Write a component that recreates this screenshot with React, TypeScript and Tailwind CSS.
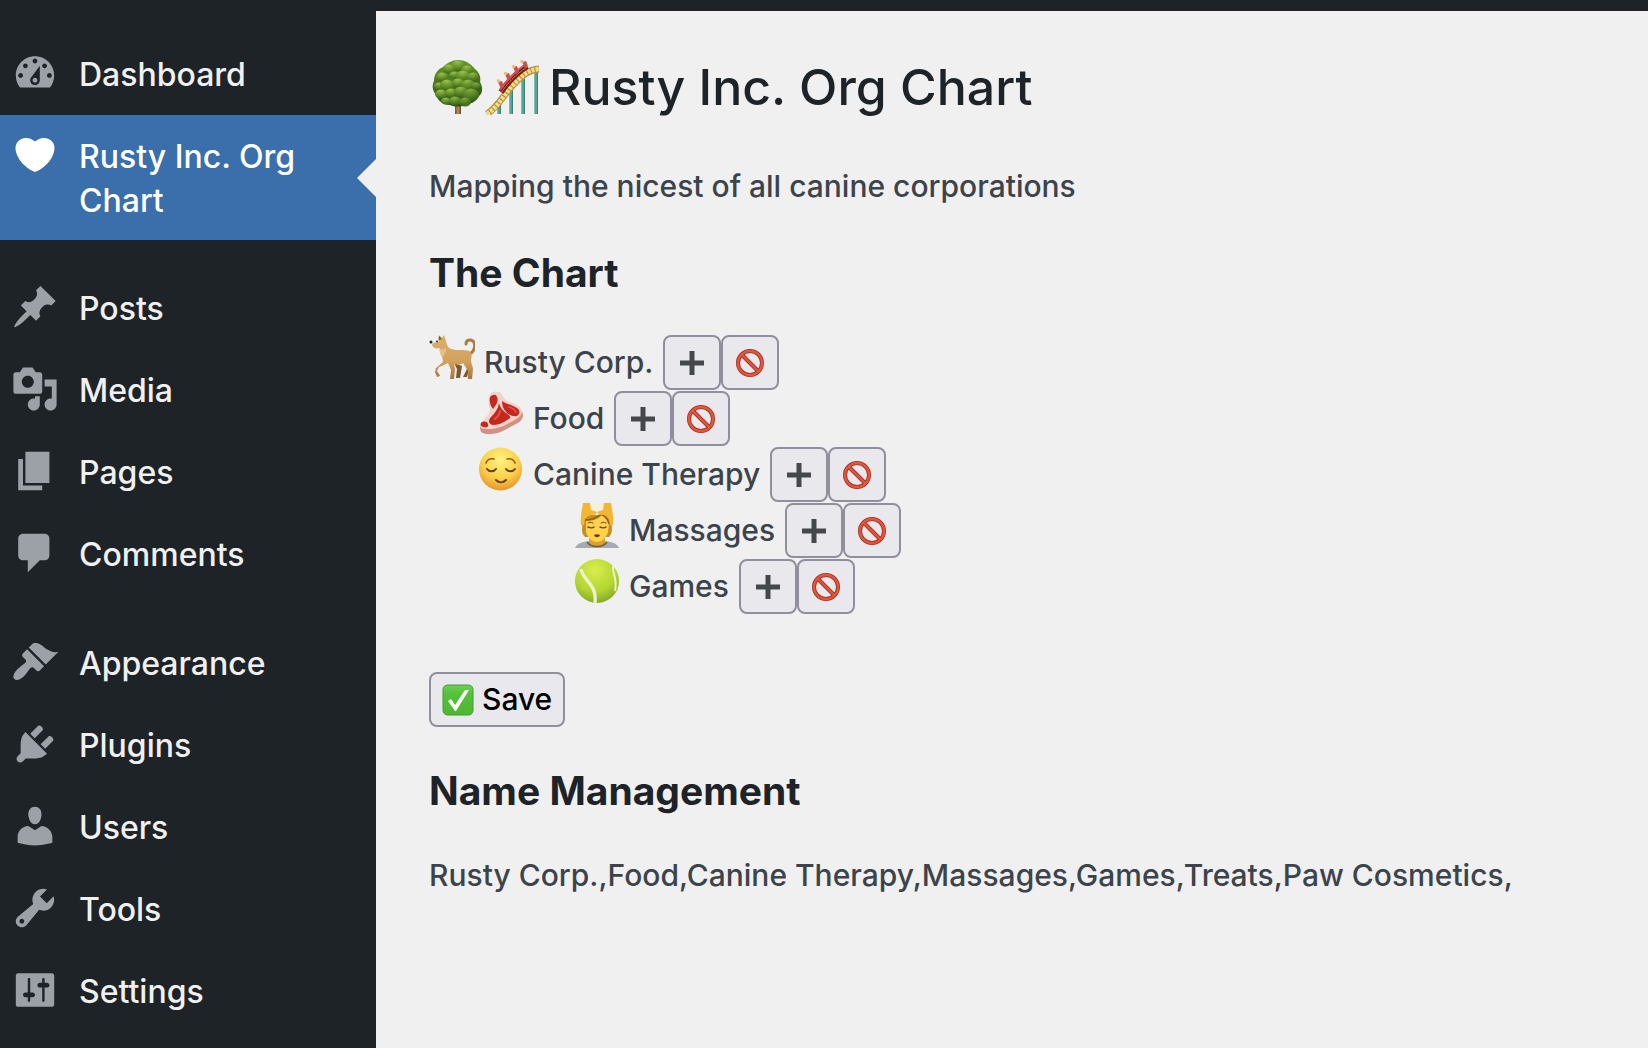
import React, { useState } from "react";

const menuGroups = [
  [
    { label: "Dashboard", current: false, path: "M3.76 16h12.48c1.1-1.37 1.76-3.11 1.76-5 0-4.42-3.58-8-8-8s-8 3.58-8 8c0 1.89.66 3.63 1.76 5zM10 4c.55 0 1 .45 1 1s-.45 1-1 1-1-.45-1-1 .45-1 1-1zM6 6c.55 0 1 .45 1 1s-.45 1-1 1-1-.45-1-1 .45-1 1-1zm8 0c.55 0 1 .45 1 1s-.45 1-1 1-1-.45-1-1 .45-1 1-1zm-5.37 5.55L12 7v6c0 1.1-.9 2-2 2s-2-.9-2-2c0-.57.24-1.08.63-1.45zM4 10c.55 0 1 .45 1 1s-.45 1-1 1-1-.45-1-1 .45-1 1-1zm12 0c.55 0 1 .45 1 1s-.45 1-1 1-1-.45-1-1 .45-1 1-1zm-5 3c0-.55-.45-1-1-1s-1 .45-1 1 .45 1 1 1 1-.45 1-1z" },
    { label: "Rusty Inc. Org Chart", current: true, path: "M10 17.12c3.33-1.4 5.74-3.79 7.04-6.21 1.28-2.41 1.46-4.81.32-6.25-1.03-1.29-2.37-1.78-3.73-1.74s-2.68.63-3.63 1.46c-.95-.83-2.27-1.42-3.63-1.46s-2.7.45-3.73 1.74c-1.14 1.44-.96 3.84.34 6.25 1.28 2.42 3.69 4.81 7.02 6.21z" },
  ],
  [
    { label: "Posts", current: false, path: "M10.44 3.02l1.82-1.82 6.36 6.35-1.83 1.82c-1.05-.68-2.48-.57-3.41.36l-.75.75c-.92.93-1.04 2.35-.35 3.41l-1.83 1.82-2.41-2.41-2.8 2.79c-.42.42-3.38 2.71-3.8 2.29s1.86-3.39 2.28-3.81l2.79-2.79L4.1 9.36l1.83-1.82c1.05.69 2.48.57 3.4-.36l.75-.75c.93-.92 1.05-2.35.36-3.41z" },
    { label: "Media", current: false, path: "M13 11V4c0-.55-.45-1-1-1h-1.67L9 1H5L3.67 3H2c-.55 0-1 .45-1 1v7c0 .55.45 1 1 1h10c.55 0 1-.45 1-1zM7 4.5c1.38 0 2.5 1.12 2.5 2.5S8.38 9.5 7 9.5 4.5 8.38 4.5 7 5.62 4.5 7 4.5zM14 6h5v10.500c0 1.38-1.12 2.5-2.5 2.5S14 17.88 14 16.5s1.12-2.5 2.5-2.5c.17 0 .34.02.5.05V9h-3V6zm-4 8.05V13h2v3.5c0 1.38-1.12 2.5-2.5 2.5S7 17.88 7 16.5 8.12 14 9.5 14c.17 0 .34.02.5.05z" },
    { label: "Pages", current: false, path: "M6 15V2h10v13H6zm-1 1h8v2H3V5h2v11z" },
    { label: "Comments", current: false, path: "M5 2h9c1.1 0 2 .9 2 2v7c0 1.1-.9 2-2 2h-2l-5 5v-5H5c-1.1 0-2-.9-2-2V4c0-1.1.9-2 2-2z" },
  ],
  [
    { label: "Appearance", current: false, path: "M14.48 11.06L7.41 3.99l1.5-1.5c.5-.56 2.3-.47 3.51.32 1.21.8 1.43 1.28 2.91 2.1 1.18.64 2.45 1.26 4.45.85zm-.71.71L6.7 4.7 4.93 6.47c-.39.39-.39 1.02 0 1.41l1.06 1.06c.39.39.39 1.03 0 1.42-.6.6-1.43 1.11-2.21 1.69-.35.26-.7.53-1.01.84C1.43 14.23.4 16.08 1.4 17.07c.99 1 2.84-.03 4.18-1.36.31-.31.58-.66.85-1.02.57-.78 1.08-1.61 1.69-2.21.39-.39 1.02-.39 1.41 0l1.06 1.06c.39.39 1.02.39 1.41 0z" },
    { label: "Plugins", current: false, path: "M13.11 4.36L9.87 7.6 8 5.73l3.24-3.24c.35-.34 1.05-.2 1.56.32.52.51.66 1.21.31 1.55zm-8 1.77l.91-1.12 9.01 9.01-1.19.84c-.71.71-2.63 1.16-3.82 1.16H6.14L4.9 17.26c-.59.59-1.54.59-2.12 0-.59-.58-.59-1.53 0-2.12l1.24-1.24v-3.88c0-1.13.4-3.19 1.09-3.89zm7.26 3.97l3.24-3.24c.34-.35 1.04-.21 1.55.31.52.51.66 1.21.31 1.55l-3.24 3.25z" },
    { label: "Users", current: false, path: "M10 9.25c-2.27 0-2.73-3.44-2.73-3.44C7 4.02 7.82 2 9.97 2c2.16 0 2.98 2.02 2.71 3.81 0 0-.41 3.44-2.68 3.44zm0 2.57L12.72 10c2.39 0 4.52 2.33 4.52 4.53v2.49s-3.65 1.13-7.24 1.13c-3.65 0-7.24-1.13-7.24-1.13v-2.49c0-2.25 1.94-4.48 4.47-4.48z" },
    { label: "Tools", current: false, path: "M16.68 9.77c-1.34 1.34-3.3 1.67-4.95.99l-5.41 6.52c-.99.99-2.59.99-3.58 0s-.99-2.59 0-3.57l6.52-5.42c-.68-1.65-.35-3.61.99-4.95 1.28-1.28 3.12-1.62 4.72-1.06l-2.89 2.89 2.82 2.82 2.86-2.87c.53 1.58.18 3.39-1.08 4.65zM3.81 16.21c.4.39 1.04.39 1.43 0 .4-.4.4-1.04 0-1.43-.39-.4-1.03-.4-1.43 0-.39.39-.39 1.03 0 1.43z" },
    { label: "Settings", current: false, path: "M18 16V4c0-.55-.45-1-1-1H3c-.55 0-1 .45-1 1v12c0 .55.45 1 1 1h14c.55 0 1-.45 1-1zM8 11h1c.55 0 1 .45 1 1s-.45 1-1 1H8v1.500c0 .28-.22.5-.5.5s-.5-.22-.5-.5V13H6c-.55 0-1-.45-1-1s.45-1 1-1h1V5.500c0-.28.22-.5.5-.5s.5.22.5.5V11zm5-2h-1c-.55 0-1-.45-1-1s.45-1 1-1h1V5.500c0-.28.22-.5.5-.5s.5.22.5.5V7h1c.55 0 1 .45 1 1s-.45 1-1 1h-1v5.500c0 .28-.22.5-.5.5s-.5-.22-.5-.5V9z" },
  ],
];

function Sidebar() {
  return (
    <nav aria-label="Main menu" className="flex w-[376px] shrink-0 flex-col gap-[27px] bg-[#1d2327] pt-[22px]">
      {menuGroups.map((group, i) => (
        <ul key={i}>
          {group.map((item) => (
            <li key={item.label}>
              <a
                href="#"
                aria-current={item.current ? "page" : undefined}
                className={
                  item.current
                    ? "relative flex bg-[#3a6fab] pt-5 pr-8 pb-[17px] pl-[11px] text-white"
                    : "flex pt-5 pb-[18px] pl-[11px] text-[#f0f0f1]"
                }
              >
                <svg viewBox="0 0 20 20" className={item.current ? "-my-1 size-12 shrink-0 fill-white" : "-my-1 size-12 shrink-0 fill-[#9ca1a7]"} aria-hidden="true">
                  <path d={item.path} />
                </svg>
                <span className="flex-1 pl-5 text-[32px] leading-[44px]">{item.label}</span>
                {item.current && (
                  <span className="absolute top-1/2 right-0 -mt-[19px] border-y-[19px] border-r-[19px] border-y-transparent border-r-[#f0f0f1]" />
                )}
              </a>
            </li>
          ))}
        </ul>
      ))}
    </nav>
  );
}

const leaves = [
  [27, 7, 7], [18, 10, 6], [36, 11, 6], [11, 18, 6], [23, 16, 5], [32, 17, 7], [42, 18, 6],
  [8, 27, 5], [16, 26, 7], [27, 24, 6], [37, 26, 7], [45, 27, 5], [10, 35, 6], [20, 34, 6],
  [30, 33, 7], [40, 36, 8], [15, 42, 5], [24, 42, 6], [34, 43, 6],
];

function TreeEmoji() {
  return (
    <svg viewBox="0 0 54 56" className="h-14 w-[54px]" role="img" aria-label="Tree">
      <defs>
        <radialGradient id="leaf" cx=".45" cy=".1" r=".9">
          <stop offset="0" stopColor="#9cc24c" />
          <stop offset=".5" stopColor="#6b982d" />
          <stop offset="1" stopColor="#3b681b" />
        </radialGradient>
        <linearGradient id="crown" x1="0" y1="0" x2="0" y2="1">
          <stop offset="0" stopColor="#6a982e" />
          <stop offset="1" stopColor="#2a5212" />
        </linearGradient>
        <linearGradient id="shade" x1="0" y1="0" x2="1" y2="1">
          <stop offset=".5" stopColor="#24480f" stopOpacity="0" />
          <stop offset="1" stopColor="#24480f" stopOpacity=".5" />
        </linearGradient>
        <linearGradient id="trunk">
          <stop offset="0" stopColor="#73502f" />
          <stop offset=".5" stopColor="#b59268" />
          <stop offset="1" stopColor="#65452a" />
        </linearGradient>
      </defs>
      <path d="M24 44h6v11h-6z" fill="url(#trunk)" />
      <path d="M27 1c8 0 13 4 17 9 5 4 6 9 5 13 3 5 3 11-1 14-3 6-9 8-14 9-5 2-10 2-15 0-7 0-12-4-14-10-4-5-4-10-2-14 0-7 4-12 9-14 4-4 9-7 15-7z" fill="url(#crown)" />
      {leaves.map(([x, y, r], i) => (
        <ellipse key={i} cx={x} cy={y} rx={r} ry={r - 1.5} fill="url(#leaf)" />
      ))}
      <path d="M27 1c8 0 13 4 17 9 5 4 6 9 5 13 3 5 3 11-1 14-3 6-9 8-14 9-5 2-10 2-15 0-7 0-12-4-14-10-4-5-4-10-2-14 0-7 4-12 9-14 4-4 9-7 15-7z" fill="url(#shade)" />
    </svg>
  );
}

function CoasterEmoji() {
  return (
    <svg viewBox="0 0 56 56" className="size-14" role="img" aria-label="Roller coaster">
      <g stroke="#58a395" strokeWidth="3.4">
        <path d="M14 45v10M26 31v24M38 20v35M51 13v42" />
      </g>
      <g stroke="#3c8377" strokeWidth="1">
        <path d="M15.500 45v10M27.500 31v24M39.500 20v35M52.500 13v42" />
      </g>
      <path d="M2 55C14 47 19 35 28 26S42 11 54 10" fill="none" stroke="#b8923f" strokeWidth="6.8" />
      <path d="M2 55C14 47 19 35 28 26S42 11 54 10" fill="none" stroke="#f1dc8a" strokeWidth="4.6" strokeDasharray="3 1.200" />
      <path d="M16 33C22 24 30 15 42 7" fill="none" stroke="#6f2018" strokeWidth="6" />
      <path d="M15 31C21 22 29 13 41 5" fill="none" stroke="#d9584b" strokeWidth="2" />
      <path d="M16 34C22 25 30 16 42 8" fill="none" stroke="#e0703f" strokeWidth="1" />
      <g fill="#c4505a">
        <path d="M13 23l4-1 2 6-3 2zM20 15l4-1 2 6-3 2zM28 8l4-1 2 6-3 2zM37 3l4-1 2 5-3 2z" />
      </g>
      <g fill="#efc070">
        <circle cx="13.500" cy="22" r="1.800" /><circle cx="20.500" cy="14.500" r="1.800" /><circle cx="28.500" cy="7.500" r="1.800" /><circle cx="37" cy="2.500" r="1.800" />
      </g>
    </svg>
  );
}

function DogEmoji() {
  return (
    <svg viewBox="0 0 46 46" className="size-[46px]" role="img" aria-label="Dog">
      <defs>
        <linearGradient id="fur" x1="0" y1="0" x2="0" y2="1">
          <stop offset="0" stopColor="#dcb06c" />
          <stop offset=".6" stopColor="#d2a25c" />
          <stop offset="1" stopColor="#a5773f" />
        </linearGradient>
      </defs>
      <path d="M40 19c6-2 7-10 4-13-3-2-7-1-7 3" fill="none" stroke="#a87c48" strokeWidth="3" strokeLinecap="round" />
      <path d="M25 28l3 6-1 9h4l2-12zM36 27l2 7-4 8h4l3-11z" fill="#80582f" />
      <path d="M9 4l1-4 3 3 2-3 2 6c1 4 2 7 5 8 6 2 13 0 18 2 3 2 3 6 2 9 0 4 2 6 2 9l-1 10h-4v-8l-5-8c-3 2-6 2-9 1l1 5-1 10h-4l1-9-3-7-4 2-5 2-2 4 2 3 1 2-3 1-2-5 1-4 7-6-1-6c-1-4-1-7-3-8-3 1-6 0-7-3l1-2 6-1z" fill="url(#fur)" />
      <path d="M10 14c2 1 5 1 7-2 0 5-1 8-4 10-2-2-2-5-3-8z" fill="#e5c185" />
      <path d="M10 1l3 3-3 1z" fill="#80532f" />
      <circle cx="2" cy="7" r="1.500" fill="#30231b" />
      <circle cx="8" cy="6.500" r="1" fill="#30231b" />
    </svg>
  );
}

function MeatEmoji() {
  return (
    <svg viewBox="0 0 46 46" className="size-[46px]" role="img" aria-label="Cut of meat">
      <path d="M12 4c3-4 8-4 11-1 2 4 4 7 9 9 8 3 13 7 13 12 0 6-5 8-11 11-7 4-13 8-24 8-6 0-8-2-8-7s8-8 10-14c1-6-3-12 0-18z" fill="#d39184" />
      <path d="M12 4c3-4 8-4 11-1 2 4 4 6 9 8 8 3 13 6 12 10-1 5-7 8-13 11-7 4-13 6-21 6-6 0-8-1-8-4s8-8 10-14c1-5-3-11 0-16z" fill="#f5d4c9" />
      <path d="M12 6c3-3 6-3 7 0 2 4-1 8-4 12-3-4-4-8-3-12zM21 12c-1 6-4 10-8 14-3 3-3 7 2 8 6 0 11-3 16-6 3-2 0-4-3-6-4-3-6-6-7-10zM24 10c4 3 8 3 13 6 5 2 6 6 2 9-4 1-8-1-11-4s-4-7-4-11zM3 32c2-2 6-2 7 1 1 3-1 4-5 3-2-1-3-2-2-4z" fill="#c5281f" />
      <path d="M22 20c0 4-3 6-5 8M31 16c3 1 6 2 7 5" fill="none" stroke="#e2564a" strokeWidth="1.800" strokeLinecap="round" />
    </svg>
  );
}

function RelievedEmoji() {
  return (
    <svg viewBox="0 0 46 46" className="size-[46px]" role="img" aria-label="Relieved face">
      <defs>
        <radialGradient id="face" cx=".5" cy=".3" r=".7">
          <stop offset="0" stopColor="#fff280" />
          <stop offset=".6" stopColor="#fbd04a" />
          <stop offset="1" stopColor="#e8942a" />
        </radialGradient>
      </defs>
      <circle cx="22.500" cy="22" r="21.500" fill="url(#face)" />
      <g fill="none" stroke="#67401a" strokeLinecap="round" strokeWidth="2">
        <path d="M9 22c2 3 7 3 9 0M28 22c2 3 7 3 9 0M18 33c3 3 7 3 10 0" />
        <path d="M8 16c1-3 4-5 8-4M37 16c-1-3-4-5-8-4" strokeWidth="1.600" stroke="#8e5a1d" />
      </g>
    </svg>
  );
}

function MassageEmoji() {
  return (
    <svg viewBox="0 0 46 46" className="size-[46px]" role="img" aria-label="Face massage">
      <path d="M1 45c2-5 8-6 14-7h16c6 1 12 2 14 7z" fill="#a5abb3" />
      <path d="M15 34h16v6c-3 5-13 5-16 0z" fill="#dea022" />
      <path d="M13 39c4 6 16 6 20 0" fill="none" stroke="#75593e" strokeWidth="1.400" />
      <path d="M9 12h28l1 14c0 3-1 6-3 8H11c-2-2-3-4-3-7z" fill="#c98e22" />
      <path d="M12 18c7 0 12-2 16-6 4 2 6 5 7 9l-1 8c-2 6-6 10-11 10s-9-4-11-10z" fill="#ffd14c" />
      <path d="M11 17c5 0 11-1 16-6 4 2 7 5 8 10" fill="none" stroke="#8a5a1c" strokeWidth="1.400" />
      <path d="M16 2c4-2 10-2 14 0v5H16z" fill="#f7efd6" />
      <path d="M9 0h7l1 7 6 2-2 3c-3-1-7 0-10 4l-1 6H7C6 14 8 7 9 0zM37 0h-7l-1 7-6 2 2 3c4-1 7 0 10 4l1 6h3c1-8-1-15-2-22z" fill="#f3b631" />
      <g fill="none" stroke="#6d451c" strokeWidth="1.400" strokeLinecap="round">
        <path d="M14 24c2 1 5 1 6 0M26 24c2 1 5 1 6 0" />
        <path d="M14 20c1-1 3-1 5 0M27 20c1-1 3-1 5 0" strokeWidth="1" />
      </g>
      <path d="M20 32c2-1 4-1 6 0-1 3-5 3-6 0z" fill="#77301f" />
    </svg>
  );
}

function TennisEmoji() {
  return (
    <svg viewBox="0 0 46 46" className="size-[46px]" role="img" aria-label="Tennis ball">
      <defs>
        <radialGradient id="ball" cx=".45" cy=".25" r=".75">
          <stop offset="0" stopColor="#d9ee4c" />
          <stop offset=".65" stopColor="#b4d532" />
          <stop offset="1" stopColor="#86a92a" />
        </radialGradient>
      </defs>
      <circle cx="23" cy="22" r="22" fill="url(#ball)" />
      <path d="M7 10c2 12 16 14 14 34" fill="none" stroke="#edf2c8" strokeWidth="3.400" />
      <path d="M39 7c-1 9 5 12 2 25" fill="none" stroke="#edf2c8" strokeWidth="2" />
    </svg>
  );
}

const boxButton = "flex h-[55px] items-center justify-center rounded-lg border-2 border-[#8f8f9d] bg-[#e9e9ed] hover:bg-[#d0d0d7]";

function TeamRow({ emoji, name, children }: { emoji: React.ReactNode; name: string; children?: React.ReactNode }) {
  return (
    <li>
      <div className="flex h-14 items-start">
        {emoji}
        <span className="pl-[9px] text-[30px] leading-[55px]">{name}</span>
        <button type="button" aria-label={"Add team under " + name} className={boxButton + " ml-[10px] w-[58px]"}>
          <svg viewBox="0 0 24 24" className="size-6" aria-hidden="true">
            <path d="M9.500 0h5v9.500H24v5h-9.500V24h-5v-9.500H0v-5h9.500z" fill="#45484a" />
          </svg>
        </button>
        <button type="button" aria-label={"Remove " + name} className={boxButton + " w-[58px]"}>
          <svg viewBox="0 0 28 28" className="size-7" aria-hidden="true">
            <g fill="none" stroke="#a8301f" strokeWidth="4">
              <circle cx="14" cy="14" r="12" />
              <path d="M5.500 5.500l17 17" />
            </g>
            <g fill="none" stroke="#e0573f" strokeWidth="2.400">
              <circle cx="14" cy="14" r="12" />
              <path d="M5.500 5.500l17 17" />
            </g>
          </svg>
        </button>
      </div>
      {children}
    </li>
  );
}

export default function App() {
  const [names] = useState(["Rusty Corp.", "Food", "Canine Therapy", "Massages", "Games", "Treats", "Paw Cosmetics"]);
  return (
    <div className="flex min-h-screen flex-col bg-[#f0f0f1] font-['Inter',sans-serif] font-[450] text-[#3c434a]">
      <header className="h-[11px] bg-[#1d2327]" />
      <div className="flex flex-1">
        <Sidebar />
        <main className="min-w-0 flex-1 pl-[53px]">
          <h1 className="flex items-center pt-[41px] pl-0.5 text-[50px] leading-[70px] text-[#1d2327]">
            <TreeEmoji />
            <CoasterEmoji />
            <span className="pl-2">Rusty Inc. Org Chart</span>
          </h1>
          <p className="pt-[41px] text-[30px] leading-[46px]">Mapping the nicest of all canine corporations</p>
          <h2 className="pt-[38px] text-[39px] leading-[52px] font-bold text-[#1d2327]">The Chart</h2>
          <ul className="pt-9">
            <TeamRow emoji={<DogEmoji />} name="Rusty Corp.">
              <ul className="pl-[49px]">
                <TeamRow emoji={<MeatEmoji />} name="Food" />
                <TeamRow emoji={<RelievedEmoji />} name="Canine Therapy">
                  <ul className="pl-24">
                    <TeamRow emoji={<MassageEmoji />} name="Massages" />
                    <TeamRow emoji={<TennisEmoji />} name="Games" />
                  </ul>
                </TeamRow>
              </ul>
            </TeamRow>
          </ul>
          <button type="button" className={boxButton + " mt-[57px] gap-2 px-[11px] text-[30px] text-black"}>
            <svg viewBox="0 0 32 32" className="size-8" aria-hidden="true">
              <defs>
                <linearGradient id="check" x1="0" y1="0" x2="0" y2="1">
                  <stop offset="0" stopColor="#6fcf57" />
                  <stop offset=".3" stopColor="#55c03a" />
                  <stop offset="1" stopColor="#4db82f" />
                </linearGradient>
              </defs>
              <rect x="1" y="1" width="30" height="30" rx="4.500" fill="url(#check)" stroke="#449a35" />
              <path d="M6 17l3-2 4 6L23 6h4L14 27h-1z" fill="#fff" />
            </svg>
            Save
          </button>
          <h2 className="pt-[38px] text-[39px] leading-[52px] font-bold text-[#1d2327]">Name Management</h2>
          <p className="pt-[35px] text-[30px] leading-[46px]">{names.join(",")},</p>
        </main>
      </div>
    </div>
  );
}
